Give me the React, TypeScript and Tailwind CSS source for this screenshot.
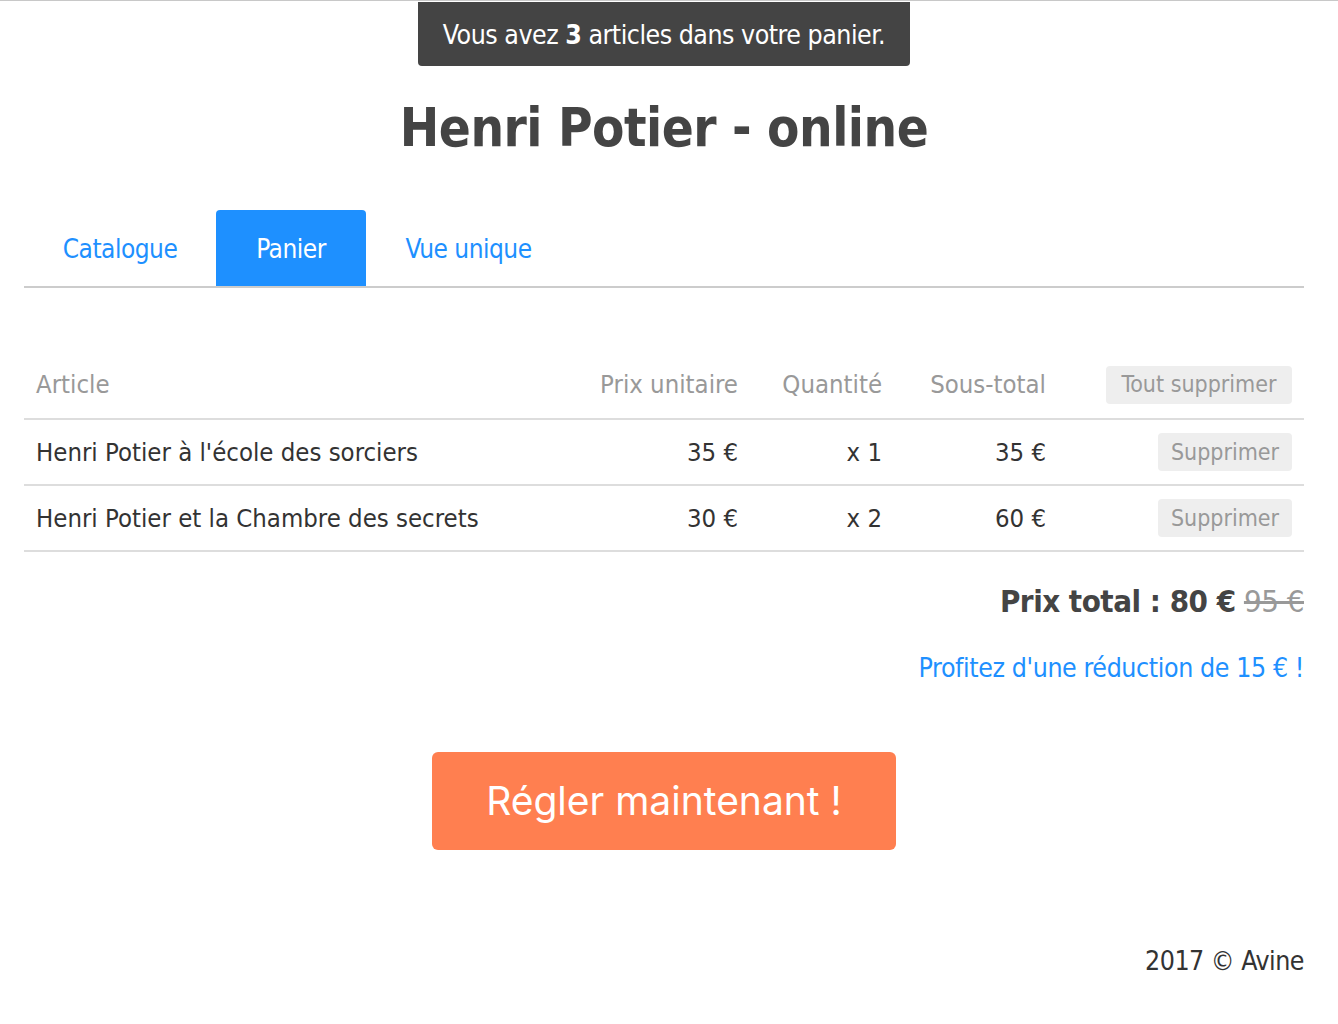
import React from "react";

const tahoma = { fontFamily: '"DejaVu Sans Condensed", "DejaVu Sans", sans-serif' };

const rows = [
  { title: "Henri Potier à l'école des sorciers", price: "35 €", qty: "x 1", sub: "35 €" },
  { title: "Henri Potier et la Chambre des secrets", price: "30 €", qty: "x 2", sub: "60 €" },
];

const cols = "grid grid-cols-[566px_160px_144px_164px_246px]";

export default function App() {
  return (
    <div className="min-h-[1024px] bg-white border-t border-[#c8c8c8] text-[#444]" style={tahoma}>
      <div className="w-[1328px]">
        <div className="flex justify-center pt-[1px]">
          <div className="w-[492px] h-[64px] bg-[#444] rounded-b-[4px] flex items-center justify-center text-white text-[26.5px] tracking-[-0.5px] pt-[2px]">
            <span>
              Vous avez <b>3</b> articles dans votre panier.
            </span>
          </div>
        </div>
        <div className="px-[24px]">
          <h1 className="text-center font-bold text-[52.5px] leading-[64px] mt-[30px] text-[#444] tracking-[-0.5px]">
            Henri Potier - online
          </h1>
          <div className="mt-[50px] flex border-b-2 border-[#cccccc] text-[26px] tracking-[-0.5px]">
            <div className="h-[76px] w-[192px] flex items-center justify-center text-[#1e90ff] pt-[2px]">Catalogue</div>
            <div className="h-[76px] w-[150px] flex items-center justify-center bg-[#1e90ff] text-white rounded-t-[4px] pt-[2px]">Panier</div>
            <div className="h-[76px] w-[205px] flex items-center justify-center text-[#1e90ff] pt-[2px]">Vue unique</div>
          </div>

          <div className="mt-[63px] text-[25.5px]">
            <div className={`${cols} h-[69px] items-center border-b-2 border-[#dddddd] text-[#999]`}>
              <div className="pl-[12px]">Article</div>
              <div className="text-right pr-[12px]">Prix unitaire</div>
              <div className="text-right pr-[12px]">Quantité</div>
              <div className="text-right pr-[12px]">Sous-total</div>
              <div className="flex justify-end pr-[12px]">
                <button className="h-[38px] w-[186px] bg-[#eeeeee] text-[#999] rounded-[4px] text-[23px]">Tout supprimer</button>
              </div>
            </div>
            {rows.map((r) => (
              <div key={r.title} className={`${cols} h-[66px] items-center border-b-2 border-[#dddddd] text-[#333]`}>
                <div className="pl-[12px]">{r.title}</div>
                <div className="text-right pr-[12px]">{r.price}</div>
                <div className="text-right pr-[12px]">{r.qty}</div>
                <div className="text-right pr-[12px]">{r.sub}</div>
                <div className="flex justify-end pr-[12px]">
                  <button className="h-[38px] w-[134px] bg-[#eeeeee] text-[#999] rounded-[4px] text-[23px]">Supprimer</button>
                </div>
              </div>
            ))}
          </div>

          <div className="mt-[31px] text-right text-[31px] leading-[36px] tracking-[-0.5px]">
            <span className="font-bold text-[#444]">Prix total : 80 €</span>{" "}
            <span className="line-through text-[#999]">95 €</span>
          </div>
          <div className="mt-[33px] text-right text-[26.5px] leading-[32px] text-[#1e90ff] tracking-[-0.4px]">
            Profitez d'une réduction de 15 € !
          </div>
          <div className="mt-[68px] flex justify-center">
            <button
              className="w-[464px] h-[98px] bg-[#ff7f50] rounded-[6px] text-white text-[39px]"
              style={{ fontFamily: 'Inter, "Noto Sans", sans-serif' }}
            >
              Régler maintenant !
            </button>
          </div>
          <div className="mt-[95px] text-right text-[26.5px] leading-[32px] text-[#333] tracking-[-0.5px]">
            2017 © Avine
          </div>
        </div>
      </div>
    </div>
  );
}
